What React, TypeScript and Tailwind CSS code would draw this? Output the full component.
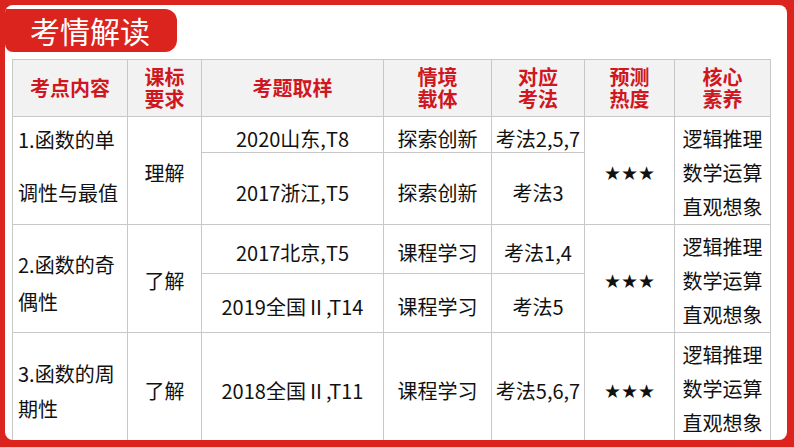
import React from 'react'

const cell = 'border border-[#c8c8c8] p-0 text-center align-middle'
const head = 'border border-[#c8c8c8] p-0 bg-[#f2f2f2] text-center align-middle font-bold text-[#d0161e] leading-[22px]'

const Literacy: React.FC = () => (
    <div className="leading-[34px] pt-[5px]">
        <div>逻辑推理</div>
        <div>数学运算</div>
        <div>直观想象</div>
    </div>
)

const Stars: React.FC = () => (
    <span className="text-[19px]" style={{ fontFamily: '"DejaVu Sans", sans-serif' }}>★★★</span>
)

const App: React.FC = () => {
    return (
        <div
            className="w-[794px] h-[447px] bg-[#dc241f] pt-[5px] pl-[5px] pr-[7px] pb-[7px]"
            style={{ fontFamily: '"Noto Sans CJK SC", "Noto Sans", sans-serif' }}
        >
            <div className="bg-white rounded-[8px] h-full overflow-hidden">
                <div className="mt-[4px] w-[172px] h-[43px] bg-[#dc241f] rounded-r-[12px] rounded-bl-[8px] pl-[25px] text-white text-[30px] leading-[43px]">
                    考情解读
                </div>
                <table className="ml-[7px] mt-[7px] w-[758px] table-fixed border-collapse text-[20px] text-[#111]">
                    <colgroup>
                        <col className="w-[115px]" />
                        <col className="w-[74px]" />
                        <col className="w-[182px]" />
                        <col className="w-[108px]" />
                        <col className="w-[93px]" />
                        <col className="w-[90px]" />
                        <col className="w-[96px]" />
                    </colgroup>
                    <thead>
                        <tr className="h-[57px]">
                            <th className={head}>考点内容</th>
                            <th className={head}>课标<br />要求</th>
                            <th className={head}>考题取样</th>
                            <th className={head}>情境<br />载体</th>
                            <th className={head}>对应<br />考法</th>
                            <th className={head}>预测<br />热度</th>
                            <th className={head}>核心<br />素养</th>
                        </tr>
                    </thead>
                    <tbody>
                        <tr className="h-[36px]">
                            <td rowSpan={2} className={`${cell} text-left pl-[5px] pb-2 leading-[26px]`}>
                                <div className="flex flex-col gap-[27px]">
                                    <span>1.函数的单</span>
                                    <span>调性与最值</span>
                                </div>
                            </td>
                            <td rowSpan={2} className={`${cell} pt-1`}>理解</td>
                            <td className={`${cell} pt-2 leading-[26px]`}>2020山东,T8</td>
                            <td className={`${cell} pt-2 leading-[26px]`}>探索创新</td>
                            <td className={`${cell} pt-2 leading-[26px]`}>考法2,5,7</td>
                            <td rowSpan={2} className={`${cell} pt-1`}><Stars /></td>
                            <td rowSpan={2} className={cell}><Literacy /></td>
                        </tr>
                        <tr className="h-[71px]">
                            <td className={`${cell} pt-2`}>2017浙江,T5</td>
                            <td className={`${cell} pt-2`}>探索创新</td>
                            <td className={`${cell} pt-2`}>考法3</td>
                        </tr>
                        <tr className="h-[49px]">
                            <td rowSpan={2} className={`${cell} text-left pl-[5px] pt-2 leading-[37px]`}>
                                2.函数的奇<br />偶性
                            </td>
                            <td rowSpan={2} className={`${cell} pt-1`}>了解</td>
                            <td className={`${cell} pt-2`}>2017北京,T5</td>
                            <td className={`${cell} pt-2`}>课程学习</td>
                            <td className={`${cell} pt-2`}>考法1,4</td>
                            <td rowSpan={2} className={`${cell} pt-1`}><Stars /></td>
                            <td rowSpan={2} className={cell}><Literacy /></td>
                        </tr>
                        <tr className="h-[59px]">
                            <td className={`${cell} pt-2`}>2019全国Ⅱ,T14</td>
                            <td className={`${cell} pt-2`}>课程学习</td>
                            <td className={`${cell} pt-2`}>考法5</td>
                        </tr>
                        <tr className="h-[107px]">
                            <td className={`${cell} text-left pl-[5px] pt-2 leading-[35px]`}>
                                3.函数的周<br />期性
                            </td>
                            <td className={`${cell} pt-2`}>了解</td>
                            <td className={`${cell} pt-2`}>2018全国Ⅱ,T11</td>
                            <td className={`${cell} pt-2`}>课程学习</td>
                            <td className={`${cell} pt-2`}>考法5,6,7</td>
                            <td className={`${cell} pt-2`}><Stars /></td>
                            <td className={cell}><Literacy /></td>
                        </tr>
                    </tbody>
                </table>
            </div>
        </div>
    )
}

export default App
